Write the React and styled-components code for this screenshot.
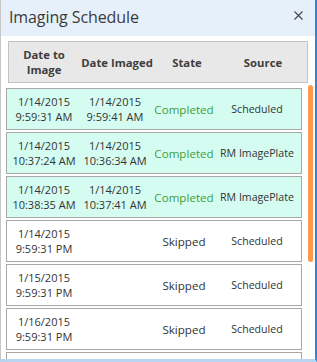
import React from "react";
import styled, { createGlobalStyle } from "styled-components";

const Global = createGlobalStyle`
  html, body { margin: 0; padding: 0; background: #ffffff; }
  body { font-family: "Open Sans", "Noto Sans", sans-serif; }
  * { box-sizing: border-box; }
`;

const Window = styled.div`
  width: 317px;
  height: 362px;
  background: #ffffff;
  border-left: 1px solid #c6c6c6;
  border-right: 2px solid #2e86d8;
  border-bottom: 3px solid #b7d5f0;
  display: flex;
  flex-direction: column;
  overflow: hidden;
`;

const TitleBar = styled.div`
  height: 36px;
  flex: none;
  background: #e6f0fa;
  display: flex;
  align-items: center;
  justify-content: space-between;
  padding: 0 12px 2px 8px;
`;

const Title = styled.div`
  font-size: 16px;
  color: #3b3b3b;
  letter-spacing: -0.1px;
`;

const Close = styled.div`
  width: 10px;
  height: 10px;
  display: flex;
  align-items: center;
  justify-content: center;
  margin-top: -3px;
`;

const Body = styled.div`
  flex: 1;
  min-height: 0;
  display: flex;
  flex-direction: column;
  padding-top: 5px;
`;

const Header = styled.div`
  margin-left: 7px;
  width: 300px;
  height: 42px;
  flex: none;
  background: #e8e8e8;
  border: 1px solid #c4c4c4;
  display: grid;
  grid-template-columns: 70px 76px 64px 88px;
  align-items: center;
  font-weight: 700;
  font-size: 11.3px;
  line-height: 15px;
  color: #3e3e3e;
`;

const HeadCell = styled.div`
  text-align: center;
`;

const ListArea = styled.div`
  flex: 1;
  min-height: 0;
  display: flex;
  padding-top: 2px;
`;

const Rows = styled.div`
  margin-left: 5px;
  width: 296px;
  padding-top: 3px;
  display: flex;
  flex-direction: column;
  gap: 2px;
  overflow: hidden;
`;

const Row = styled.div`
  flex: none;
  height: 42px;
  border: 1px solid #a8a8a8;
  background: ${(p) => (p.$done ? "#d5fcf1" : "#ffffff")};
  display: grid;
  grid-template-columns: 74px 68px 70px 76px;
  align-items: center;
  line-height: 15px;
  color: #333333;
`;

const Cell = styled.div`
  text-align: center;
  white-space: nowrap;
  color: ${(p) => (p.$green ? "#3d9e3d" : "#333333")};
  font-size: ${(p) => p.$size || 11}px;
`;

const Track = styled.div`
  margin-left: 6px;
  width: 5px;
  flex: none;
`;

const Thumb = styled.div`
  width: 5px;
  height: 177px;
  border-radius: 3px;
  background: #fb9a4e;
`;

const data = [
  ["1/14/2015", "9:59:31 AM", "1/14/2015", "9:59:41 AM", "Completed", "Scheduled"],
  ["1/14/2015", "10:37:24 AM", "1/14/2015", "10:36:34 AM", "Completed", "RM ImagePlate"],
  ["1/14/2015", "10:38:35 AM", "1/14/2015", "10:37:41 AM", "Completed", "RM ImagePlate"],
  ["1/14/2015", "9:59:31 PM", "", "", "Skipped", "Scheduled"],
  ["1/15/2015", "9:59:31 PM", "", "", "Skipped", "Scheduled"],
  ["1/16/2015", "9:59:31 PM", "", "", "Skipped", "Scheduled"],
  ["1/17/2015", "9:59:31 PM", "", "", "Skipped", "Scheduled"],
];

export default function App() {
  return (
    <>
      <Global />
      <Window>
        <TitleBar>
          <Title>Imaging Schedule</Title>
          <Close>
            <svg width="9" height="9" viewBox="0 0 9 9">
              <path d="M0.5 0.5L8.5 8.5M8.5 0.5L0.5 8.5" stroke="#444" strokeWidth="1.1" />
            </svg>
          </Close>
        </TitleBar>
        <Body>
          <Header>
            <HeadCell>Date to<br />Image</HeadCell>
            <HeadCell>Date Imaged</HeadCell>
            <HeadCell>State</HeadCell>
            <HeadCell>Source</HeadCell>
          </Header>
          <ListArea>
            <Rows>
              {data.map((r, i) => {
                const done = r[4] === "Completed";
                return (
                  <Row key={i} $done={done}>
                    <Cell>{r[0]}<br />{r[1]}</Cell>
                    <Cell>{r[2] && (<>{r[2]}<br />{r[3]}</>)}</Cell>
                    <Cell $green={done} $size={11.6}>{r[4]}</Cell>
                    <Cell $size={10.6}>{r[5]}</Cell>
                  </Row>
                );
              })}
            </Rows>
            <Track>
              <Thumb />
            </Track>
          </ListArea>
        </Body>
      </Window>
    </>
  );
}
